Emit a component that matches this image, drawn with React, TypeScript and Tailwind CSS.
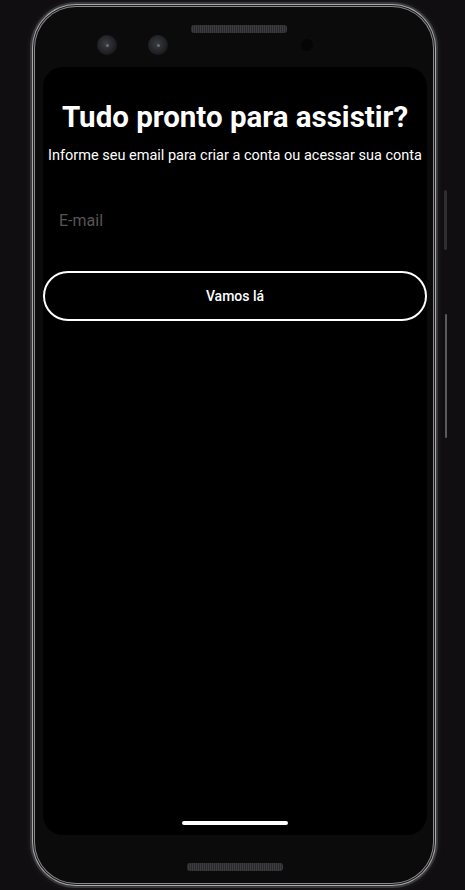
import React from 'react';

const FONT = { fontFamily: 'Roboto, "Liberation Sans", sans-serif' };

// camera lens drawn as a small radial circle
const Lens = () => (
  <div className="w-[20px] h-[20px] rounded-full bg-[radial-gradient(circle_at_45%_45%,#3a3d42_0%,#25272b_45%,#15161a_80%)] flex items-center justify-center">
    <div className="w-[3px] h-[3px] rounded-full bg-[#6b6f75]" />
  </div>
);

const Grill = () => (
  <div className="w-[96px] h-[8px] rounded-[3px] bg-[repeating-linear-gradient(90deg,#2a2a2c_0px,#2a2a2c_1px,#3c3c3f_1px,#3c3c3f_2px)]" />
);

export default function App() {
  return (
    <div className="relative w-[465px] h-[890px] bg-[#100e11] overflow-hidden" style={FONT}>
      {/* side buttons */}
      <div className="absolute left-[444px] top-[190px] w-[3px] h-[60px] rounded-full bg-[#2e2e31]" />
      <div className="absolute left-[445px] top-[314px] w-[2px] h-[124px] rounded-full bg-[#5a5a5e]" />

      <div className="pl-[30px] pt-[2px]">
        <div className="w-[408px] h-[886px] rounded-[46px] bg-[#3a3a3d] p-[2px] shadow-[0_0_6px_rgba(255,255,255,0.08)]">
          <div className="w-full h-full rounded-[44px] bg-[#a9a9ad] p-[1px]">
            <div className="w-full h-full rounded-[43px] bg-[#1c1c1f] p-[1px]">
              <div className="w-full h-full rounded-[42px] bg-[#8a8a8e] p-[1px]">
                <div className="w-full h-full rounded-[41px] bg-[#0b0b0c] flex flex-col pl-[8px] pr-[6px]">
                  {/* top bezel */}
                  <div className="h-[60px] relative flex items-start">
                    <div className="flex items-center gap-[31px] ml-[54px] mt-[28px]">
                      <Lens />
                      <Lens />
                    </div>
                    <div className="ml-[23px] mt-[18px]">
                      <Grill />
                    </div>
                    <div className="ml-[14px] mt-[32px] w-[12px] h-[12px] rounded-full bg-[#050505]" />
                  </div>

                  {/* screen */}
                  <div className="h-[768px] rounded-[20px] bg-black flex flex-col items-center">
                    <h1 className="mt-[32px] text-[29.5px] leading-[36px] font-bold text-white">
                      Tudo pronto para assistir?
                    </h1>
                    <p className="mt-[12px] text-[14.5px] leading-[18px] text-white">
                      Informe seu email para criar a conta ou acessar sua conta
                    </p>
                    <div className="w-full mt-[44px] px-[16px]">
                      <input
                        className="w-full bg-transparent outline-none text-[16px] leading-[20px] text-white placeholder:text-[#555555]"
                        style={FONT}
                        placeholder="E-mail"
                      />
                    </div>
                    <button
                      className="mt-[38px] w-full h-[50px] rounded-full border-2 border-white text-white text-[14px] font-medium"
                      style={FONT}
                    >
                      Vamos lá
                    </button>
                    <div className="flex-1" />
                    <div className="mb-[10px] w-[106px] h-[4px] rounded-full bg-white" />
                  </div>

                  {/* bottom bezel */}
                  <div className="flex-1 flex justify-center pt-[28px]">
                    <Grill />
                  </div>
                </div>
              </div>
            </div>
          </div>
        </div>
      </div>
    </div>
  );
}
